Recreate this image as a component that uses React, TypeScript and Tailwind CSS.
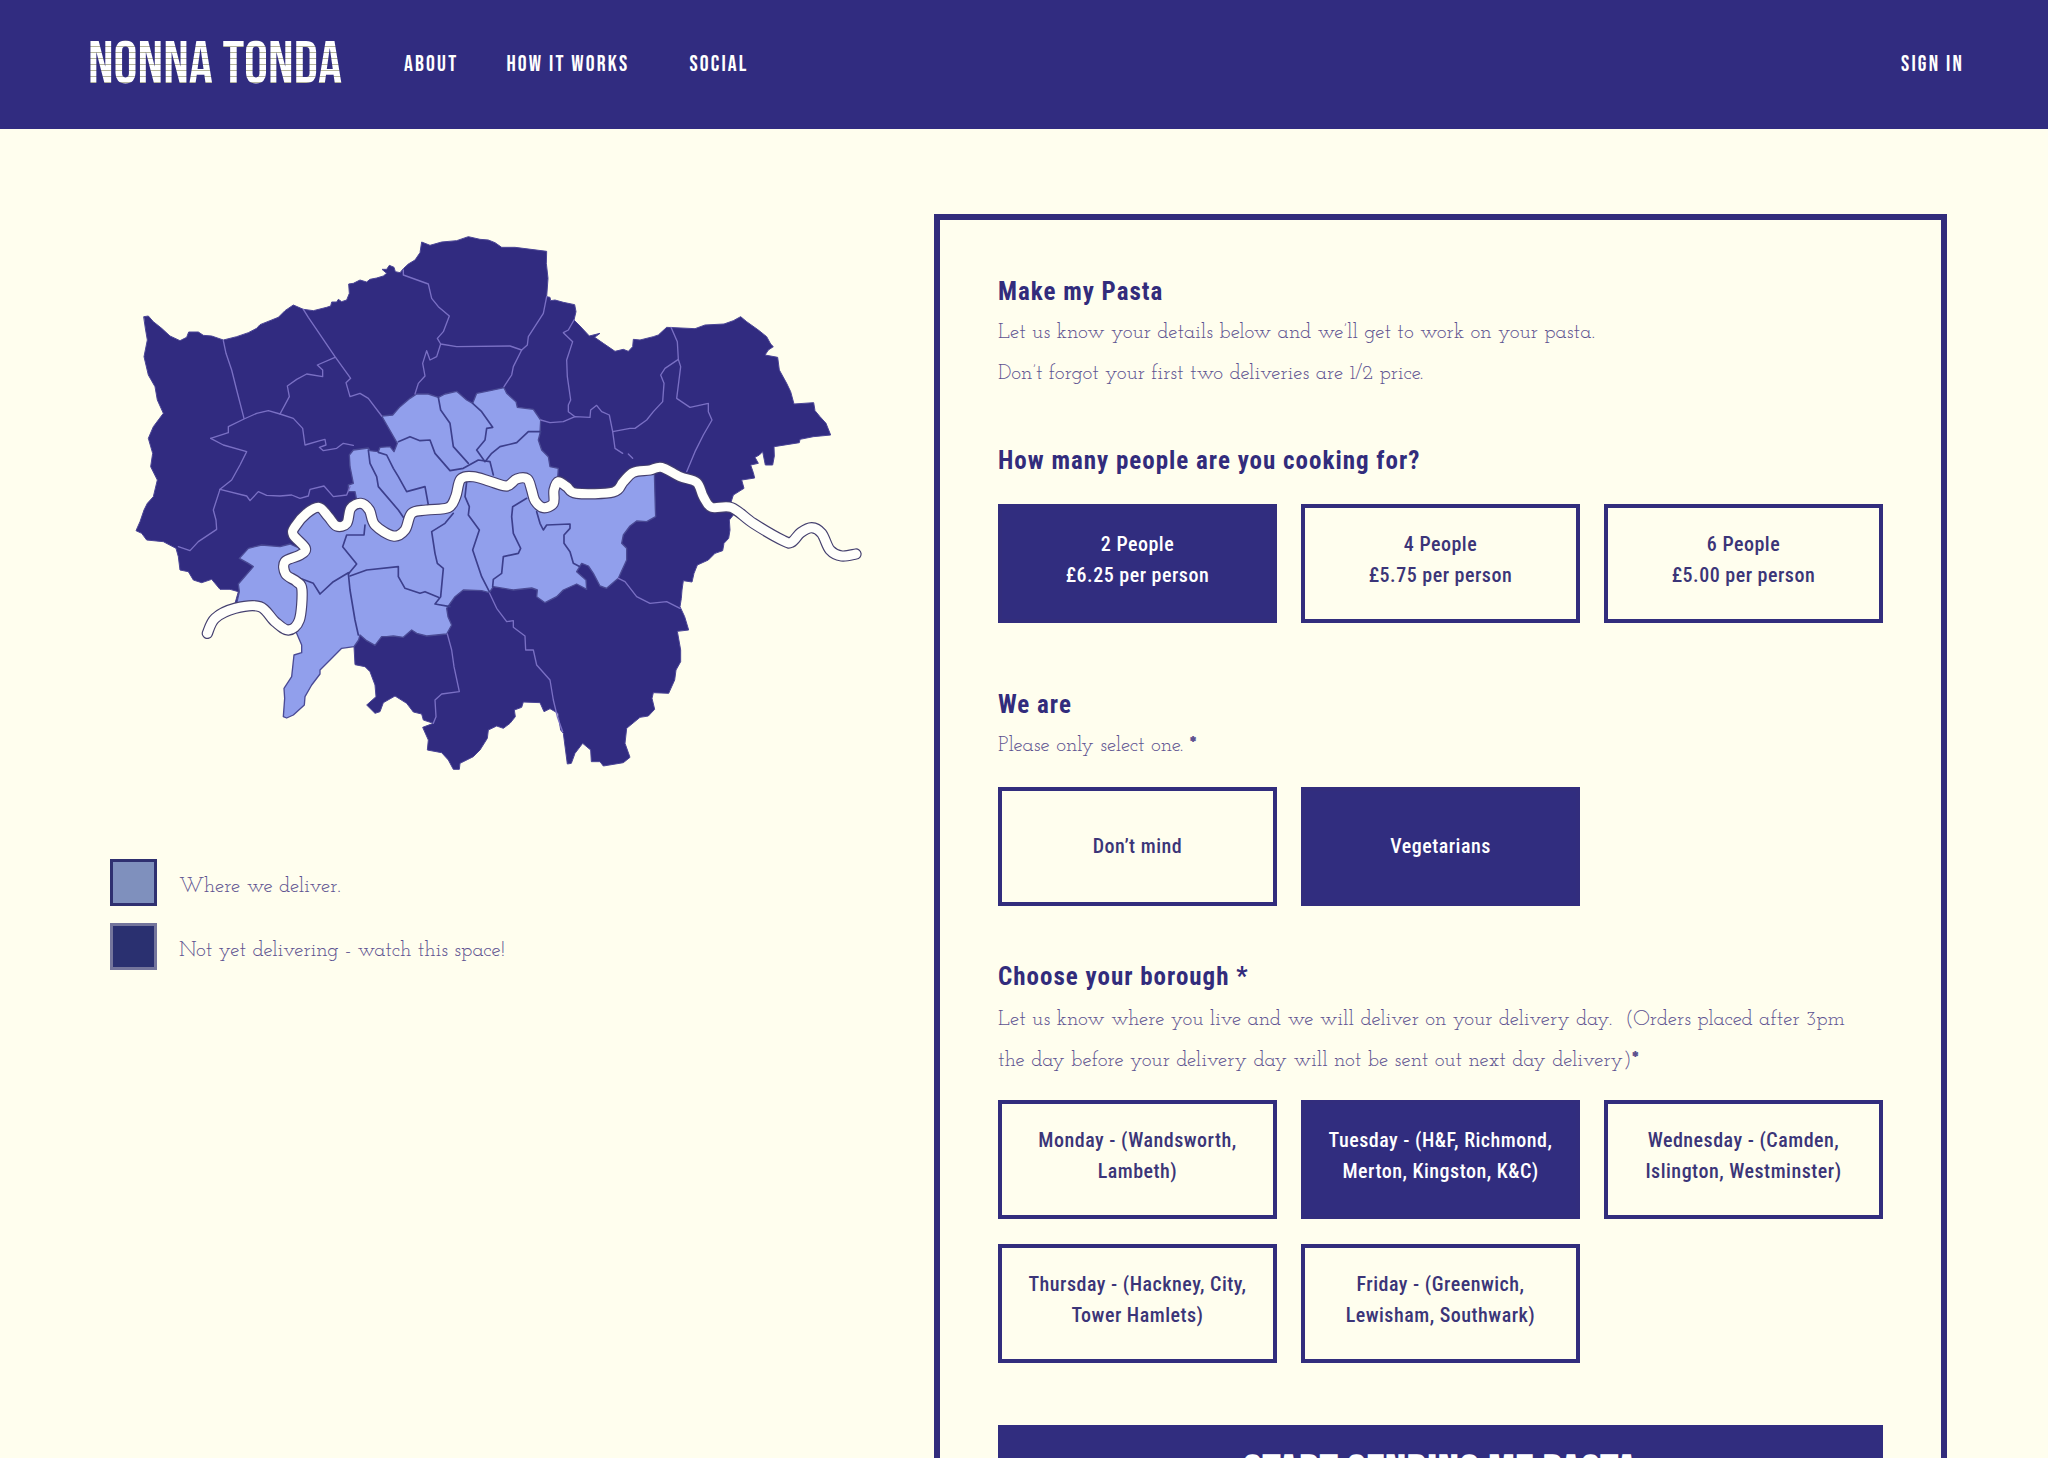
import React, { useState } from 'react';

type Point = [number, number];

interface OptionProps {
    name: string;
    value: string;
    lines: string[];
    checked: boolean;
    onSelect: (value: string) => void;
}

const PEOPLE = [
    { value: '2', lines: ['2 People', '£6.25 per person'] },
    { value: '4', lines: ['4 People', '£5.75 per person'] },
    { value: '6', lines: ['6 People', '£5.00 per person'] },
];

const DIETS = [
    { value: 'any', lines: ['Don’t mind'] },
    { value: 'veg', lines: ['Vegetarians'] },
];

const DAYS = [
    { value: 'mon', lines: ['Monday - (Wandsworth,', 'Lambeth)'] },
    { value: 'tue', lines: ['Tuesday - (H&F, Richmond,', 'Merton, Kingston, K&C)'] },
    { value: 'wed', lines: ['Wednesday - (Camden,', 'Islington, Westminster)'] },
    { value: 'thu', lines: ['Thursday - (Hackney, City,', 'Tower Hamlets)'] },
    { value: 'fri', lines: ['Friday - (Greenwich,', 'Lewisham, Southwark)'] },
];

// Greater London outline
const LONDON = '72,290 85,288 100,305 125,325 150,348 180,362 200,352 206,336 235,336 250,346 275,348 310,360 350,350 385,338 410,325 420,314 450,302 475,292 495,272 520,255 550,268 580,272 620,262 632,258 635,246 650,246 655,238 665,245 680,240 688,220 686,192 700,190 720,180 740,186 750,178 770,174 790,168 800,160 786,148 800,148 808,136 822,142 826,155 840,158 850,146 865,132 885,120 900,98 905,66 930,76 965,66 1010,62 1045,50 1080,58 1105,60 1125,68 1145,82 1185,82 1280,94 1279,130 1284,175 1280,230 1290,232 1292,242 1305,240 1330,247 1364,254 1368,275 1362,300 1380,318 1408,348 1440,340 1424,352 1450,370 1485,394 1510,388 1525,394 1538,380 1540,358 1560,360 1600,350 1615,345 1640,322 1725,326 1755,315 1812,312 1840,302 1862,290 1880,305 1915,330 1940,350 1952,372 1960,380 1945,390 1935,405 1973,412 1978,450 2000,490 2012,515 2022,552 2081,548 2085,572 2100,590 2118,610 2132,645 2080,650 2040,658 2038,668 1962,680 1963,708 1958,735 1936,735 1928,695 1918,705 1905,712 1915,730 1892,735 1900,758 1904,774 1865,780 1872,805 1840,825 1832,850 1840,885 1828,900 1830,930 1826,955 1812,970 1808,992 1785,1000 1765,1020 1732,1035 1722,1060 1716,1086 1690,1082 1686,1110 1684,1135 1680,1160 1694,1190 1706,1230 1672,1234 1682,1290 1682,1325 1668,1350 1664,1380 1646,1420 1600,1418 1596,1435 1604,1468 1585,1488 1560,1492 1520,1525 1515,1570 1530,1612 1510,1628 1450,1638 1440,1625 1414,1625 1412,1590 1388,1570 1365,1600 1354,1630 1342,1632 1330,1540 1322,1530 1314,1480 1290,1466 1272,1475 1260,1448 1210,1446 1205,1462 1183,1470 1186,1490 1170,1510 1150,1525 1130,1518 1105,1530 1102,1555 1080,1590 1060,1610 1020,1630 1018,1648 1000,1648 985,1620 965,1598 922,1590 925,1560 908,1522 940,1510 910,1500 905,1482 880,1476 860,1450 825,1428 790,1448 780,1475 765,1480 740,1455 768,1430 765,1395 750,1355 735,1340 705,1334 702,1280 600,1200 345,1150 355,1115 330,1108 300,1108 275,1078 245,1088 220,1080 205,1055 180,1050 175,1010 168,985 130,965 80,960 65,940 48,932 60,905 72,870 82,850 100,830 112,780 92,740 98,700 85,655 100,620 130,580 112,540 105,500 85,465 72,410 82,360 76,325';

// Boroughs on the delivery round
const DELIVERED = '785,588 818,585 840,560 870,535 890,522 925,522 955,532 975,522 1010,514 1040,540 1058,550 1070,520 1110,512 1152,503 1160,520 1188,545 1192,562 1240,568 1262,600 1260,640 1255,660 1265,690 1285,710 1290,740 1315,745 1312,790 1370,822 1480,818 1510,785 1540,755 1603,755 1606,865 1607,890 1580,905 1550,903 1530,918 1510,945 1505,970 1520,985 1520,1020 1495,1075 1460,1105 1440,1098 1420,1060 1405,1038 1385,1030 1370,1055 1398,1080 1400,1108 1370,1092 1330,1110 1310,1130 1275,1148 1250,1130 1252,1110 1235,1104 1180,1110 1120,1100 1108,1118 1085,1112 1030,1110 1005,1130 980,1165 984,1190 995,1215 980,1242 920,1248 890,1240 875,1230 850,1252 820,1248 800,1250 785,1250 765,1276 740,1262 720,1245 716,1260 702,1280 665,1285 630,1320 600,1350 600,1362 575,1395 555,1430 553,1455 520,1485 500,1494 490,1490 494,1435 492,1405 515,1370 522,1305 545,1298 545,1275 528,1235 490,1230 440,1170 420,1160 380,1170 350,1150 358,1115 355,1092 400,1040 385,1030 358,1015 385,985 425,975 480,980 510,972 540,985 520,945 525,920 560,880 597,862 625,890 650,918 680,910 692,865 712,850 705,815 685,815 685,795 700,790 690,740 688,705 700,690 745,684 750,692 775,695 780,682 810,680 822,695 832,670';

const OUTER_BORDERS = [
    '310,362 318,400 335,450 350,510 372,595',
    '272,655 325,638 325,620 372,597 410,580 445,572 480,582 520,595 548,625 555,675 600,662 615,658 618,675 598,682 610,692 650,685 670,670 700,676',
    '272,655 310,675 380,695 360,735 335,780 300,808',
    '480,582 500,545 508,530 502,498 530,478 560,462 608,470 608,450 592,435 645,412',
    '550,268 565,292 645,410 692,475 678,488 690,530 720,520 745,535 785,588',
    '850,150 850,165 925,192 935,235 955,260 988,288 970,335 952,355 962,372 1010,380 1170,378 1205,390',
    '962,372 950,410 930,420 920,392 908,430 915,468 895,490 885,522',
    '300,808 380,828 390,842 415,815 440,826 480,828 515,825 540,835 565,828 570,808 612,798 640,830 680,825 690,800',
    '300,808 280,870 288,900 290,928 235,965 210,992 175,980',
    '1280,230 1270,280 1225,350 1222,375 1205,390 1180,440 1175,465 1152,500',
    '1362,300 1345,330 1330,338 1358,365 1340,420 1342,470 1352,540 1345,555 1345,575 1365,590',
    '1262,600 1290,608 1330,605 1365,590 1410,592 1412,570 1430,556 1445,575 1468,585 1478,635 1530,625 1545,625 1580,600 1600,575 1628,545 1632,490 1622,465 1635,445 1675,418',
    '1653,322 1672,365 1675,418 1682,440 1670,535 1710,562 1765,550 1765,575 1776,600 1750,645 1725,695 1700,755',
    '1478,635 1485,685 1508,700',
    '1525,702 1538,715',
    '1495,1075 1515,1085 1550,1130 1590,1150 1640,1145 1680,1165',
    '982,1242 995,1290 1002,1340 1018,1415 965,1422 945,1440 948,1490 940,1510',
    '1108,1118 1130,1165 1160,1205 1180,1202 1180,1222 1215,1248 1217,1290 1240,1290 1250,1335 1290,1380 1300,1440 1312,1490 1328,1535',
];

const INNER_BORDERS = [
    '955,532 962,570 990,610 1000,680 1045,730',
    '835,665 870,650 900,662 930,660 945,700 990,752 1030,745 1075,720 1110,725 1120,765',
    '1058,550 1085,575 1118,622 1100,625 1095,660 1070,690 1095,725 1115,700 1140,680 1190,668 1225,635 1262,635',
    '745,690 750,730 770,770 775,800 835,870 852,895',
    '775,697 800,705 820,745 835,770 860,815 915,800 925,855',
    '1040,785 1035,830 1048,860 1045,885 1078,930 1058,990 1085,1070 1108,1115',
    '1000,880 975,910 935,935 945,1000 952,1030 970,1045 962,1130 945,1152 990,1160',
    '735,915 732,945 680,945 668,980 710,1032 685,1062',
    '690,1068 740,1050 835,1040 835,1070 855,1105 900,1120 915,1115 955,1132',
    '685,1060 690,1110 705,1200 715,1245',
    '540,1075 580,1090 600,1122 640,1085 685,1058',
    '1220,835 1178,860 1175,890 1180,940 1202,985 1195,1000 1150,1010 1145,1060 1120,1078 1118,1100',
    '1250,875 1260,910 1270,930 1280,915 1350,912 1350,925 1332,945 1332,970 1350,995 1360,1030 1380,1040',
];

const THAMES: Point[] = [
    [262, 1240], [285, 1195], [345, 1165], [420, 1160], [465, 1205], [505, 1230], [538, 1200], [546, 1110],
    [530, 1085], [497, 1062], [495, 1025], [540, 1005], [556, 985], [520, 945], [525, 920], [560, 880],
    [597, 862], [625, 890], [650, 918], [680, 910], [692, 865], [722, 850], [748, 870], [765, 915],
    [820, 948], [855, 930], [875, 880], [920, 870], [985, 863], [1007, 830], [1022, 778], [1060, 770],
    [1110, 784], [1160, 798], [1190, 777], [1222, 777], [1235, 810], [1245, 842], [1270, 863], [1300, 850],
    [1302, 810], [1315, 785], [1340, 800], [1370, 820], [1480, 816], [1510, 785], [1540, 757], [1590, 750],
    [1625, 742], [1680, 770], [1730, 787], [1750, 830], [1775, 862], [1835, 863], [1900, 910], [1990, 962],
    [2015, 966], [2042, 938], [2075, 923], [2105, 940], [2130, 990], [2165, 1008], [2208, 1002],
];

// Catmull-Rom through the points, written out as cubic segments
const smoothPath = (points: Point[]) => {
    let d = `M${points[0][0]},${points[0][1]}`;
    for (let i = 0; i < points.length - 1; i++) {
        const p0 = points[Math.max(i - 1, 0)];
        const p1 = points[i];
        const p2 = points[i + 1];
        const p3 = points[Math.min(i + 2, points.length - 1)];
        d += ` C${p1[0] + (p2[0] - p0[0]) / 6},${p1[1] + (p2[1] - p0[1]) / 6} ${p2[0] - (p3[0] - p1[0]) / 6},${p2[1] - (p3[1] - p1[1]) / 6} ${p2[0]},${p2[1]}`;
    }
    return d;
};

const DeliveryMap: React.FC = () => {
    const thames = smoothPath(THAMES);
    return (
        <svg viewBox="0 0 2280 1740" className="w-full" role="img" aria-label="Map of London boroughs" fill="none" strokeLinejoin="round" strokeLinecap="round">
            <polygon points={LONDON} fill="#312b80" stroke="#4b4596" strokeWidth="3" />
            <polygon points={DELIVERED} fill="#919fec" stroke="#4a4a94" strokeWidth="4" />
            {OUTER_BORDERS.map(points => <polyline key={points} points={points} stroke="#7a70c4" strokeWidth="4" />)}
            {INNER_BORDERS.map(points => <polyline key={points} points={points} stroke="#3c3f8c" strokeWidth="5" />)}
            <path d={thames} stroke="#45406f" strokeWidth="34" />
            <path d={thames} stroke="#fffffb" strokeWidth="27" />
        </svg>
    );
};

const Option: React.FC<OptionProps> = ({ name, value, lines, checked, onSelect }) => (
    <label className={`relative flex h-[119px] cursor-pointer flex-col items-center justify-center border-4 border-[#322d7d] text-center text-xl leading-[31px] font-medium tracking-wide ${lines.length > 1 ? 'pb-2' : ''} ${checked ? 'bg-[#312d7f] text-white' : 'text-[#3b3578]'}`}>
        <input type="radio" name={name} value={value} checked={checked} onChange={() => onSelect(value)} className="sr-only" />
        {lines.map(line => <span key={line} className="whitespace-nowrap">{line}</span>)}
    </label>
);

const App: React.FC = () => {
    const [people, setPeople] = useState('2');
    const [diet, setDiet] = useState('veg');
    const [day, setDay] = useState('tue');

    return (
        <div className="min-h-screen bg-[#fffeee] font-['Roboto_Condensed','Liberation_Sans_Narrow','Roboto',sans-serif] text-[#322c7c]">
            <header className="flex h-[129px] items-center justify-between bg-[#312c80] pr-[84px] pl-[88px] font-['Bebas_Neue','Roboto_Condensed','Roboto',sans-serif] text-white">
                <div className="flex items-center">
                    <a href="#" className="w-[316px] text-[60px] leading-[60px]">
                        <span className="bg-[repeating-linear-gradient(#fff_0px,#fff_5px,#b5b59c_5px,#b5b59c_6px)] bg-clip-text text-transparent">NONNA TONDA</span>
                    </a>
                    <nav className="flex items-center text-[22px] leading-[30px] tracking-widest">
                        <a href="#about" className="mr-12">ABOUT</a>
                        <a href="#how" className="mr-[60px]">HOW IT WORKS</a>
                        <a href="#social">SOCIAL</a>
                    </nav>
                </div>
                <a href="#sign-in" className="text-[22px] leading-[30px] tracking-widest">SIGN IN</a>
            </header>

            <main className="grid grid-cols-[824fr_1013fr] items-start pt-[85px] pr-[101px] pl-[110px]">
                <section className="pt-1.5">
                    <div className="mr-[54px] ml-[10px]">
                        <DeliveryMap />
                    </div>
                    <ul className="mt-[59px] space-y-[17px] font-['Josefin_Slab','Liberation_Serif',serif] text-[21px] text-[#5d5290]">
                        <li className="flex items-center gap-[22px]">
                            <span className="size-[47px] border-[3px] border-[#2f3070] bg-[#7f90bd]"></span>
                            <span className="pt-2">Where we deliver.</span>
                        </li>
                        <li className="flex items-center gap-[22px]">
                            <span className="size-[47px] border-[3px] border-[#74759c] bg-[#2a3070]"></span>
                            <span className="pt-2">Not yet delivering - watch this space!</span>
                        </li>
                    </ul>
                </section>

                <form className="border-6 border-[#322c7c] px-[58px] pt-[54px] pb-14" onSubmit={e => e.preventDefault()}>
                    <h2 className="text-[25px] leading-[36px] font-bold tracking-[1px]">Make my Pasta</h2>
                    <p className="mt-0.5 font-['Josefin_Slab','Liberation_Serif',serif] text-[21px] leading-[41px] text-[#5d5290]">
                        Let us know your details below and we’ll get to work on your pasta.<br />
                        Don’t forgot your first two deliveries are 1/2 price.
                    </p>

                    <fieldset className="mt-[49px]">
                        <legend className="mb-[25px] text-[25px] leading-[36px] font-bold tracking-[1px]">How many people are you cooking for?</legend>
                        <div className="grid grid-cols-3 gap-x-6 gap-y-[25px]">
                            {PEOPLE.map(option => <Option key={option.value} name="people" {...option} checked={people === option.value} onSelect={setPeople} />)}
                        </div>
                    </fieldset>

                    <fieldset className="mt-[64px]">
                        <legend className="text-[25px] leading-[36px] font-bold tracking-[1px]">We are</legend>
                        <p className="mt-0.5 mb-[21px] font-['Josefin_Slab','Liberation_Serif',serif] text-[21px] leading-[41px] text-[#5d5290]">Please only select one. <b>*</b></p>
                        <div className="grid grid-cols-3 gap-x-6 gap-y-[25px]">
                            {DIETS.map(option => <Option key={option.value} name="diet" {...option} checked={diet === option.value} onSelect={setDiet} />)}
                        </div>
                    </fieldset>

                    <fieldset className="mt-[53px]">
                        <legend className="text-[25px] leading-[36px] font-bold tracking-[1px]">Choose your borough *</legend>
                        <p className="mt-1 mb-[19px] font-['Josefin_Slab','Liberation_Serif',serif] text-[21px] leading-[41px] text-[#5d5290]">
                            Let us know where you live and we will deliver on your delivery day. &nbsp;(Orders placed after 3pm<br />
                            the day before your delivery day will not be sent out next day delivery)<b>*</b>
                        </p>
                        <div className="grid grid-cols-3 gap-x-6 gap-y-[25px]">
                            {DAYS.map(option => <Option key={option.value} name="day" {...option} checked={day === option.value} onSelect={setDay} />)}
                        </div>
                    </fieldset>

                    <button type="submit" className="mt-[62px] h-[100px] w-full bg-[#312d7f] font-['Bebas_Neue','Roboto_Condensed','Roboto',sans-serif] text-[48px] leading-[48px] font-bold tracking-wide text-white">START SENDING ME PASTA</button>
                </form>
            </main>
        </div>
    );
};

export default App;
